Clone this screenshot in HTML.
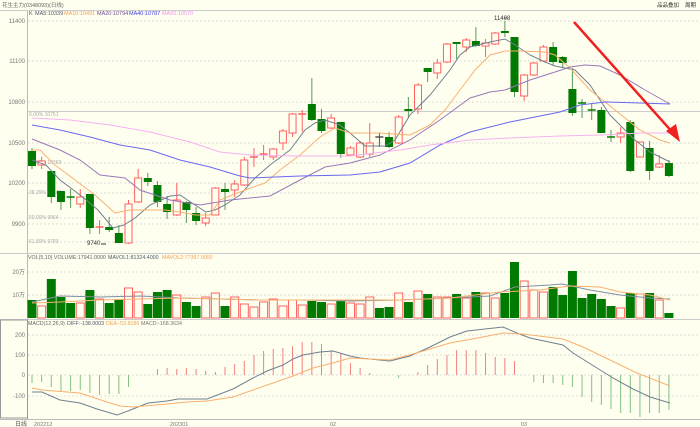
<!DOCTYPE html>
<html><head><meta charset="utf-8"><style>
html,body{margin:0;padding:0;background:#fffff0;width:700px;height:427px;overflow:hidden}
svg{display:block}
text{font-family:"Liberation Sans","Noto Sans CJK SC",sans-serif}
</style></head><body>
<svg id="s" width="700" height="427" xmlns="http://www.w3.org/2000/svg">
<rect width="700" height="427" fill="#fffff0"/>
<text x="2" y="7" font-size="5.5" fill="#666">花生主力(0348093)(日线)</text>
<text x="657" y="7" font-size="5.5" fill="#333">品品叠加</text>
<text x="685" y="7" font-size="5.5" fill="#333">周期</text>
<line x1="0" y1="10.5" x2="700" y2="10.5" stroke="#ccc"/>
<text x="29" y="15" font-size="5.5" fill="#555">K</text>
<text x="35" y="15" font-size="5.5" fill="#4a5a6a">MA5:10339</text>
<text x="64" y="15" font-size="5.5" fill="#f0a050">MA10:10491</text>
<text x="97" y="15" font-size="5.5" fill="#704a90">MA20:10794</text>
<text x="129" y="15" font-size="5.5" fill="#4040e0">MA40:10787</text>
<text x="162" y="15" font-size="5.5" fill="#f090f0">MA60:10570</text>
<g id="g"></g>
</svg>
<script>
var g=document.getElementById('g'),h='';
function L(x1,y1,x2,y2,c,w,d){h+='<line x1="'+x1+'" y1="'+y1+'" x2="'+x2+'" y2="'+y2+'" stroke="'+c+'" stroke-width="'+(w||1)+'"'+(d?' stroke-dasharray="'+d+'"':'')+'/>';}
function T(x,y,t,c,s,a){h+='<text x="'+x+'" y="'+y+'" font-size="'+(s||6.5)+'" fill="'+(c||'#666')+'"'+(a?' text-anchor="'+a+'"':'')+'>'+t+'</text>';}
function P(pts,c,w){h+='<polyline fill="none" stroke="'+c+'" stroke-width="'+(w||1)+'" points="'+pts.map(function(p){return p.join(',')}).join(' ')+'"/>';}
L(27.5,11,27.5,420,'#bbb');
[[21,'11400'],[61,'11100'],[102,'10800'],[143,'10500'],[183,'10200'],[224,'9900']].forEach(function(a){L(28,a[0],700,a[0],'#ddd',1,'2,2');T(25,a[0]+2,a[1],'#777',6,'end');});
L(28,111.5,700,111.5,'#ccc');T(29,116,'0.00% 10751','#aaa',5);
[[163,'23.60% 10369'],[193,'38.20% 10145'],[218,'50.00% 9964'],[242,'61.80% 9783']].forEach(function(a){L(28,a[0],700,a[0],'#ddd',1,'2,2');T(29,a[0]+1,a[1],'#aaa',5);});
L(0,253.5,700,253.5,'#ccc');
T(28,259,'VOL(5,10) VOLUME:17941.0000','#666',5.3);
T(108,259,'MAVOL1:81324.4000','#4a5a6a',5.3);T(162,259,'MAVOL2:77397.9000','#f0a050',5.3);
L(28,272,700,272,'#ddd',1,'2,2');L(28,295,700,295,'#ddd',1,'2,2');
T(25,274,'20万','#777',6,'end');T(25,297,'10万','#777',6,'end');
L(0,319.5,700,319.5,'#ccc');
h+='<rect x="0.5" y="320" width="27" height="98" fill="none" stroke="#999"/>';
T(28,325,'MACD(12,26,9)','#666',5.3);T(67,325,'DIFF:-138.0003','#4a5a6a',5.3);
T(106,325,'DEA:-53.8186','#f0a050',5.3);T(141,325,'MACD:-168.3634','#777',5.3);
[[335,'200'],[355,'100'],[375,'0'],[396,'-100']].forEach(function(a){L(28,a[0],700,a[0],'#ddd',1,'2,2');T(25,a[0]+2,a[1],'#777',6,'end');});
L(0,419.5,700,419.5,'#bbb');
T(15,426,'日线','#555',6);T(34,426,'202212','#777',5.5);T(170,426,'202301','#777',5.5);T(330,426,'02','#777',5.5);T(521,426,'03','#777',5.5);
var C=[[151,166,148,169,0],[161,165,157,169,1],[171,197,171,203,0],[191,202,191,210,0],[197,197,189,208,0],[204,197,189,208,1],[194,228,194,234,0],[227,227,220,234,1],[227,230,217,232,0],[233,243,225,243,0],[243,204,200,244,1],[202,178,169,203,1],[178,182,173,186,0],[185,202,181,207,0],[204,212,196,219,0],[215,200,183,216,1],[202,210,201,223,0],[213,221,207,225,0],[223,218,213,226,1],[215,188,187,215,1],[189,192,183,210,0],[190,184,180,197,1],[185,160,157,186,1],[157,157,148,167,1],[154,154,145,160,1],[157,149,148,160,1],[143,131,129,150,1],[133,114,113,137,1],[114,114,110,132,1],[104,120,78,121,0],[119,131,109,133,0],[128,118,114,129,1],[122,154,122,158,0],[155,148,146,156,1],[157,143,141,158,1],[154,143,123,157,1],[137,137,133,147,2],[137,147,132,148,0],[143,117,115,144,1],[109,111,97,118,0],[109,85,83,114,1],[68,72,68,82,0],[73,63,59,79,1],[62,44,43,63,1],[42,44,42,59,0],[47,40,38,52,1],[41,46,27,47,0],[46,43,39,57,1],[44,33,32,45,1],[31,33,21,37,0],[37,92,37,97,0],[96,75,74,101,1],[75,63,62,76,1],[61,47,45,62,1],[47,62,42,66,0],[57,63,56,67,0],[89,113,68,116,0],[103,103,99,118,0],[110,110,103,120,0],[110,133,107,133,0],[137,137,130,142,0],[137,133,127,143,1],[122,171,120,172,0],[157,142,142,157,1],[148,171,141,180,0],[167,164,155,168,1],[163,176,160,177,0]];
var V=[300,306,279,297,303,303,290,299,303,299,288,292,304,292,290,295,302,306,297,293,306,297,304,307,302,299,306,300,305,301,302,304,301,303,304,297,308,307,293,302,291,294,297,297,294,298,292,293,298,293,262,281,290,292,287,295,271,298,294,299,306,308,293,294,293,300,313];
var M=[383,382,387,391,391,390,393,395,394,394,387,375,375,369,368,369,368,369,371,372,367,364,361,355,351,349,348,346,342,342,344,350,353,363,368,373,375,375,378,375,372,365,359,355,350,350,350,353,357,358,361,375,382,383,383,385,387,397,402,405,409,413,413,417,413,413,410];
var G='#007a00',R='#ff6060';
C.forEach(function(c,i){var x=32+i*9.65,up=c[4]==1,col=up?R:(c[4]==2?'#555':G);
L(x,c[2],x,c[3],up?R:(c[4]==2?'#555':'#5a9a5a'));
var t=Math.min(c[0],c[1]),b=Math.max(c[0],c[1]);
if(b-t<1.5){L(x-4,t,x+4,t,col,1.5);}
else if(up){h+='<rect x="'+(x-3.5)+'" y="'+t+'" width="7" height="'+(b-t)+'" fill="#fffff0" stroke="'+R+'"/>';}
else{h+='<rect x="'+(x-4)+'" y="'+t+'" width="8" height="'+(b-t)+'" fill="'+G+'"/>';}
var vt=V[i];
if(up)h+='<rect x="'+(x-4)+'" y="'+vt+'" width="8" height="'+(318-vt)+'" fill="#fffff0" stroke="'+R+'"/>';
else h+='<rect x="'+(x-4.5)+'" y="'+vt+'" width="9" height="'+(318-vt)+'" fill="'+G+'"/>';
var m=M[i];if(m!=375)L(x,375,x,m,m<375?'#f08080':'#80c080');
});
T(494,20,'11408','#333',6);L(504,18,506,18,'#333');
T(87,245,'9740','#333',6);L(101,244,106,244,'#333');
P([[32,160],[46,165],[60,180],[80,195],[98,210],[113,228],[124,225],[135,218],[150,205],[170,196],[180,195],[195,205],[206,212],[215,210],[225,205],[240,195],[255,178],[270,165],[290,150],[305,130],[315,123],[325,120],[340,125],[350,133],[365,146],[385,146],[395,140],[410,115],[430,95],[450,70],[460,55],[470,47],[490,42],[505,39],[515,45],[530,55],[545,62],[555,66],[575,70],[590,85],[600,100],[610,115],[620,125],[635,140],[650,152],[660,157],[670,162]],'#708090');
P([[32,150],[40,150],[55,165],[75,180],[95,195],[115,213],[130,210],[145,210],[165,210],[180,212],[195,215],[210,215],[220,200],[245,190],[265,183],[280,170],[300,155],[320,137],[335,128],[350,133],[380,133],[410,135],[430,125],[445,110],[460,90],[475,70],[490,55],[505,51],[520,51],[545,52],[555,55],[570,68],[590,90],[615,110],[640,130],[660,140],[670,143]],'#f8b070');
P([[32,139],[60,150],[80,160],[100,175],[125,178],[140,190],[170,200],[200,205],[230,200],[270,196],[300,180],[325,167],[350,163],[380,155],[410,140],[440,120],[470,98],[490,92],[505,90],[530,80],[555,72],[570,67],[585,65],[600,66],[620,75],[645,90],[670,104]],'#9a78b8');
P([[32,125],[60,130],[90,137],[120,145],[150,150],[180,160],[210,167],[240,176],[250,178],[300,176],[350,175],[380,172],[410,163],[440,145],[470,132],[510,122],[560,112],[580,105],[605,102],[640,103],[670,104]],'#6868f0');
P([[32,118],[70,120],[110,125],[150,132],[190,142],[220,152],[250,155],[300,156],[350,156],[400,150],[430,145],[470,140],[510,138],[560,136],[600,135],[640,133],[670,133]],'#f8b0f0');
P([[32,302],[60,296],[100,297],[140,296],[180,298],[220,299],[260,300],[300,300],[350,301],[400,300],[450,298],[490,296],[515,287],[550,285],[562,284],[590,290],[620,295],[650,298],[670,299]],'#8090a0');
P([[32,303],[60,302],[100,300],[140,299],[180,298],[220,299],[260,300],[300,300],[350,300],[400,300],[450,298],[500,292],[540,290],[570,286],[600,287],[620,292],[650,295],[670,300]],'#f8b070');
P([[32,392],[42,392],[60,400],[80,403],[97,409],[117,415],[128,411],[148,403],[167,401],[178,399],[207,399],[233,389],[253,378],[267,371],[283,365],[293,359],[303,355],[320,352],[333,351],[350,356],[360,358],[390,361],[410,356],[430,347],[450,337],[467,331],[503,327],[517,333],[530,338],[563,345],[573,353],[597,368],[613,378],[633,389],[650,397],[670,403]],'#708090');
P([[32,388],[42,390],[80,393],[107,402],[120,406],[133,407],[167,404],[187,402],[207,401],[233,397],[253,390],[273,383],[293,376],[313,368],[333,363],[350,358],[390,360],[413,354],[450,343],[483,337],[503,333],[523,334],[563,339],[583,347],[610,360],[637,373],[670,386]],'#f8b070');
L(574,22,674,134,'#f02020',2.5);
h+='<polygon points="680,142 666,131 676,124" fill="#f02020"/>';
g.innerHTML=h;
</script>
</body></html>
